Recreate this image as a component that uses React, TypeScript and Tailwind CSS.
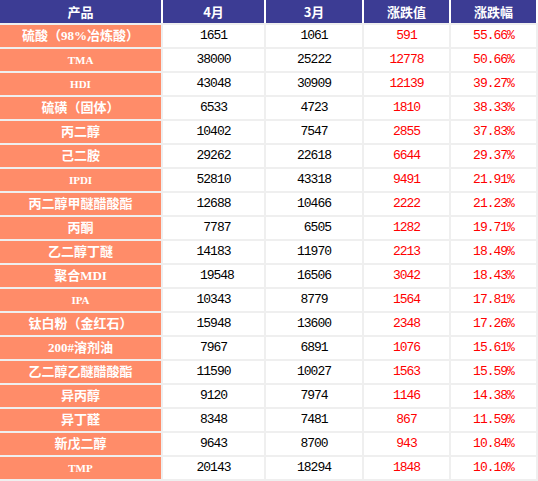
import React from "react";

const rows: [string, string, string, string, string][] = [
  ["硫酸（98%冶炼酸）", "1651", "1061", "591", "55.66%"],
  ["TMA", "38000", "25222", "12778", "50.66%"],
  ["HDI", "43048", "30909", "12139", "39.27%"],
  ["硫磺（固体）", "6533", "4723", "1810", "38.33%"],
  ["丙二醇", "10402", "7547", "2855", "37.83%"],
  ["己二胺", "29262", "22618", "6644", "29.37%"],
  ["IPDI", "52810", "43318", "9491", "21.91%"],
  ["丙二醇甲醚醋酸酯", "12688", "10466", "2222", "21.23%"],
  ["丙酮", "\u00a07787", "\u00a06505", "1282", "19.71%"],
  ["乙二醇丁醚", "14183", "11970", "2213", "18.49%"],
  ["聚合MDI", "\u00a019548", "16506", "3042", "18.43%"],
  ["IPA", "10343", "8779", "1564", "17.81%"],
  ["钛白粉（金红石）", "15948", "13600", "2348", "17.26%"],
  ["200#溶剂油", "7967", "6891", "1076", "15.61%"],
  ["乙二醇乙醚醋酸酯", "11590", "10027", "1563", "15.59%"],
  ["异丙醇", "9120", "7974", "1146", "14.38%"],
  ["异丁醛", "8348", "7481", "867", "11.59%"],
  ["新戊二醇", "9643", "8700", "943", "10.84%"],
  ["TMP", "20143", "18294", "1848", "10.10%"],
];

const headers = ["产品", "4月", "3月", "涨跌值", "涨跌幅"];
const cols = "grid grid-cols-[161px_101px_96px_85px_85px] gap-x-[2px]";

export default function App() {
  return (
    <div className="w-[538px] h-[481px] bg-white overflow-hidden">
      <div className={`${cols} h-[23px] bg-white`}>
        {headers.map((h) => (
          <div
            key={h}
            className="bg-[#3c3c94] text-white font-bold text-[13px] flex items-center justify-center"
            style={{ fontFamily: '"Noto Sans CJK SC", sans-serif' }}
          >
            {h}
          </div>
        ))}
      </div>
      <div className={`${cols} w-[538px] bg-[#efefef] pt-[2px] gap-y-[2px] pb-[2px] pr-[2px] auto-rows-[22px]`}>
        {rows.map((r) => {
          const latin = /^[A-Z]+$/.test(r[0]);
          return (
            <React.Fragment key={r[0]}>
              <div
                className={`bg-[#ff8c69] text-white font-bold flex items-center justify-center whitespace-nowrap ${
                  latin ? "text-[11px]" : "text-[13px]"
                }`}
                style={{ fontFamily: '"Liberation Serif", "Noto Sans CJK SC", serif' }}
              >
                {r[0]}
              </div>
              {[1, 2, 3, 4].map((i) => (
                <div
                  key={i}
                  className={`bg-white flex items-center justify-center text-[13px] tracking-[-1px] whitespace-pre ${
                    i >= 3 ? "text-[#ff0000]" : "text-black"
                  }`}
                  style={{ fontFamily: '"Liberation Mono", monospace' }}
                >
                  {r[i]}
                </div>
              ))}
            </React.Fragment>
          );
        })}
      </div>
    </div>
  );
}
